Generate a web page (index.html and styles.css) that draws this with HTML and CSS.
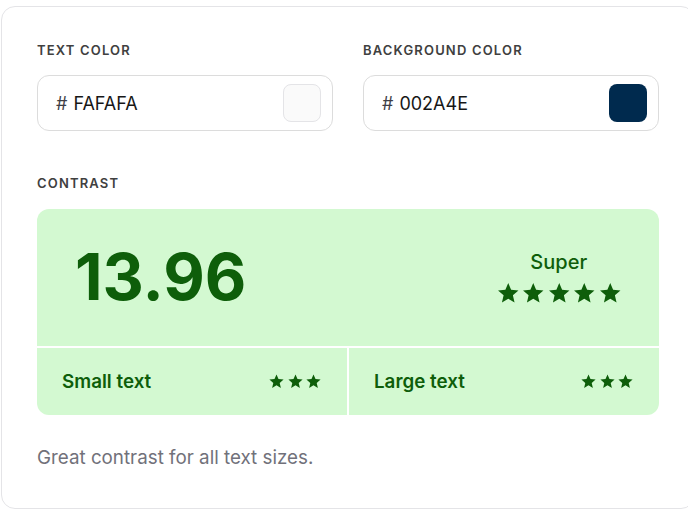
FILE: index.html
```html
<!DOCTYPE html>
<html lang="en">
<head>
<meta charset="utf-8">
<title>Contrast checker</title>
<link rel="stylesheet" href="styles.css">
</head>
<body>
<svg width="0" height="0" class="defs" aria-hidden="true">
  <symbol id="star" viewBox="0 0 24 24"><path d="M12 17.27L18.18 21l-1.64-7.03L22 9.24l-7.19-.61L12 2 9.19 8.63 2 9.24l5.46 4.73L5.82 21z"/></symbol>
</svg>
<div class="card">
  <div class="pickers">
    <div class="field">
      <div class="label">Text color</div>
      <div class="input">
        <span class="hash">#</span><span class="value">FAFAFA</span>
        <span class="swatch swatch-light"></span>
      </div>
    </div>
    <div class="field">
      <div class="label">Background color</div>
      <div class="input">
        <span class="hash">#</span><span class="value">002A4E</span>
        <span class="swatch swatch-dark"></span>
      </div>
    </div>
  </div>

  <div class="label contrast-label">Contrast</div>
  <div class="result">
    <div class="score">
      <div class="ratio">13.96</div>
      <div class="grade">
        <div class="grade-name">Super</div>
        <div class="stars stars-big">
          <svg><use href="#star"/></svg><svg><use href="#star"/></svg><svg><use href="#star"/></svg><svg><use href="#star"/></svg><svg><use href="#star"/></svg>
        </div>
      </div>
    </div>
    <div class="cells">
      <div class="cell">
        <span class="cell-name">Small text</span>
        <div class="stars stars-small">
          <svg><use href="#star"/></svg><svg><use href="#star"/></svg><svg><use href="#star"/></svg>
        </div>
      </div>
      <div class="cell">
        <span class="cell-name">Large text</span>
        <div class="stars stars-small">
          <svg><use href="#star"/></svg><svg><use href="#star"/></svg><svg><use href="#star"/></svg>
        </div>
      </div>
    </div>
  </div>
  <p class="note">Great contrast for all text sizes.</p>
</div>
</body>
</html>
```

FILE: styles.css
```css
* { box-sizing: border-box; }

html, body {
  margin: 0;
  padding: 0;
  background: #ffffff;
  overflow: hidden;
}

body {
  font-family: Inter, "Noto Sans", sans-serif;
  color: #171717;
}

.defs {
  position: absolute;
  width: 0;
  height: 0;
}

.card {
  margin: 6px 0 0 1px;
  width: 694px;
  height: 503px;
  border: 1px solid #e4e4e7;
  border-radius: 14px;
  padding: 32px 35px;
  background: #ffffff;
}

.pickers {
  display: grid;
  grid-template-columns: 1fr 1fr;
  gap: 30px;
}

.label {
  font-size: 13px;
  line-height: 20px;
  font-weight: 600;
  letter-spacing: 0.09em;
  text-transform: uppercase;
  color: #404040;
  padding-top: 1px;
}

.input {
  margin-top: 15px;
  height: 56px;
  border: 1px solid #dcdcdc;
  border-radius: 12px;
  display: flex;
  align-items: center;
  padding: 0 11px 0 18px;
}

.hash {
  font-size: 18px;
  color: #3f3f46;
  margin-right: 6px;
}

.value {
  font-size: 18px;
  color: #171717;
  flex: 1;
}

.swatch {
  width: 38px;
  height: 38px;
  border-radius: 8px;
}

.swatch-light {
  background: #fafafa;
  border: 1px solid #e4e4e7;
}

.swatch-dark {
  background: #002a4e;
}

.contrast-label {
  margin-top: 41px;
}

.result {
  margin-top: 16px;
  border-radius: 12px;
  overflow: hidden;
  display: flex;
  flex-direction: column;
  gap: 2px;
  color: #0e5e0a;
}

.score {
  height: 137px;
  background: #d3f9d1;
  display: flex;
  align-items: center;
  justify-content: space-between;
  padding: 0 37px 0 38px;
}

.ratio {
  font-size: 64px;
  font-weight: 700;
  line-height: 1;
  margin-top: -2px;
}

.grade {
  display: flex;
  flex-direction: column;
  align-items: center;
  gap: 7px;
}

.grade-name {
  font-size: 20px;
  font-weight: 500;
  line-height: 24px;
}

.stars {
  display: flex;
  fill: #0e5e0a;
}

.stars-big {
  gap: 1px;
}

.stars-big svg {
  width: 24.5px;
  height: 24.5px;
}

.stars-small {
  gap: 1.5px;
}

.stars-small svg {
  width: 17px;
  height: 17px;
}

.cells {
  display: grid;
  grid-template-columns: 1fr 1fr;
  gap: 2px;
}

.cell {
  height: 67px;
  background: #d3f9d1;
  display: flex;
  align-items: center;
  justify-content: space-between;
  padding: 0 25px;
}

.cell-name {
  font-size: 18.8px;
  font-weight: 600;
}

.note {
  margin: 29px 0 0;
  font-size: 18.8px;
  line-height: 28px;
  color: #71717a;
}
```
